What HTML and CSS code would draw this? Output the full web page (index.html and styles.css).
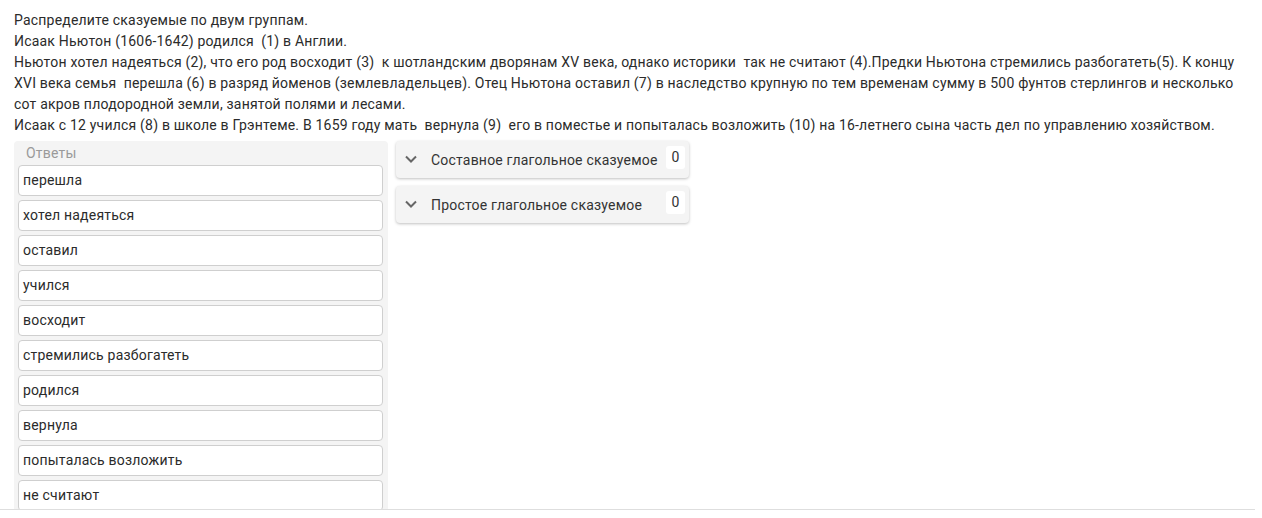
FILE: index.html
```html
<html>
    <head>
        <meta charset="utf-8">
        <link rel="stylesheet" href="styles.css">
    </head>
    <body>
        <div class="page">
            <div class="task">
                Распределите сказуемые по двум группам.<br>
                Исаак Ньютон (1606-1642) родился&nbsp; (1) в Англии.<br>
                Ньютон хотел надеяться (2), что его род восходит (3)&nbsp; к шотландским дворянам XV века, однако историки&nbsp; так не считают (4).Предки Ньютона стремились разбогатеть(5). К концу XVI века семья&nbsp; перешла (6) в разряд йоменов (землевладельцев). Отец Ньютона оставил (7) в наследство крупную по тем временам сумму в 500 фунтов стерлингов и несколько сот акров плодородной земли, занятой полями и лесами.<br>
                Исаак с 12 учился (8) в школе в Грэнтеме. В 1659 году мать&nbsp; вернула (9)&nbsp; его в поместье и попыталась возложить (10) на 16-летнего сына часть дел по управлению хозяйством.
            </div>
            <div class="board">
                <div class="answers">
                    <div class="answers-title">Ответы</div>
                    <div class="item">перешла</div>
                    <div class="item">хотел надеяться</div>
                    <div class="item">оставил</div>
                    <div class="item">учился</div>
                    <div class="item">восходит</div>
                    <div class="item">стремились разбогатеть</div>
                    <div class="item">родился</div>
                    <div class="item">вернула</div>
                    <div class="item">попыталась возложить</div>
                    <div class="item">не считают</div>
                </div>
                <div class="groups">
                    <div class="group">
                        <svg class="chevron" width="12" height="8" viewBox="0 0 12 8"><path d="M1 1.5 L6 6.5 L11 1.5" fill="none" stroke="#666" stroke-width="2"/></svg>
                        <span class="group-name">Составное глагольное сказуемое</span>
                        <span class="count">0</span>
                    </div>
                    <div class="group">
                        <svg class="chevron" width="12" height="8" viewBox="0 0 12 8"><path d="M1 1.5 L6 6.5 L11 1.5" fill="none" stroke="#666" stroke-width="2"/></svg>
                        <span class="group-name">Простое глагольное сказуемое</span>
                        <span class="count">0</span>
                    </div>
                </div>
            </div>
        </div>
    </body>
</html>
```

FILE: styles.css
```css
body {
    margin: 0px;
    background: #fff;
    font-family: Roboto, "Noto Sans", sans-serif;
    color: #2b2b2b;
    letter-spacing: 0.2px;
}
.page {
    width: 1255px;
    height: 510px;
    box-sizing: border-box;
    padding: 10px 0px 0px 14px;
    border-bottom: 1px solid #dedede;
    overflow: hidden;
}
.task {
    font-size: 14px;
    line-height: 21px;
    width: 1236px;
}
.board {
    display: flex;
    align-items: flex-start;
    gap: 8px;
    margin-top: 5px;
}
.answers {
    width: 374px;
    box-sizing: border-box;
    background: #f4f4f4;
    border-radius: 4px;
    padding: 4px 5px 4px 4px;
    display: flex;
    flex-direction: column;
    gap: 4px;
}
.answers-title {
    font-size: 14px;
    color: #9a9a9a;
    padding-left: 8px;
    height: 16px;
    line-height: 17px;
}
.item {
    height: 31px;
    box-sizing: border-box;
    background: #fff;
    border: 1px solid #cfcfcf;
    border-radius: 4px;
    padding: 0px 4px;
    font-size: 14px;
    line-height: 28px;
    color: #2b2b2b;
}
.groups {
    width: 293px;
    display: flex;
    flex-direction: column;
    gap: 8px;
}
.group {
    height: 37px;
    box-sizing: border-box;
    background: #f4f4f4;
    border-radius: 4px;
    box-shadow: 0px 1px 3px rgba(0, 0, 0, 0.25);
    display: flex;
    align-items: center;
    padding: 0px 4px 0px 9px;
}
.chevron {
    margin-right: 14px;
    margin-top: -2px;
}
.group-name {
    flex-grow: 1;
    font-size: 14px;
    color: #333;
    margin-top: 1px;
}
.count {
    background: #fff;
    border-radius: 3px;
    width: 19px;
    height: 23px;
    margin-top: -5px;
    text-align: center;
    font-size: 14px;
    line-height: 22px;
    color: #333;
    letter-spacing: 0px;
}
```
